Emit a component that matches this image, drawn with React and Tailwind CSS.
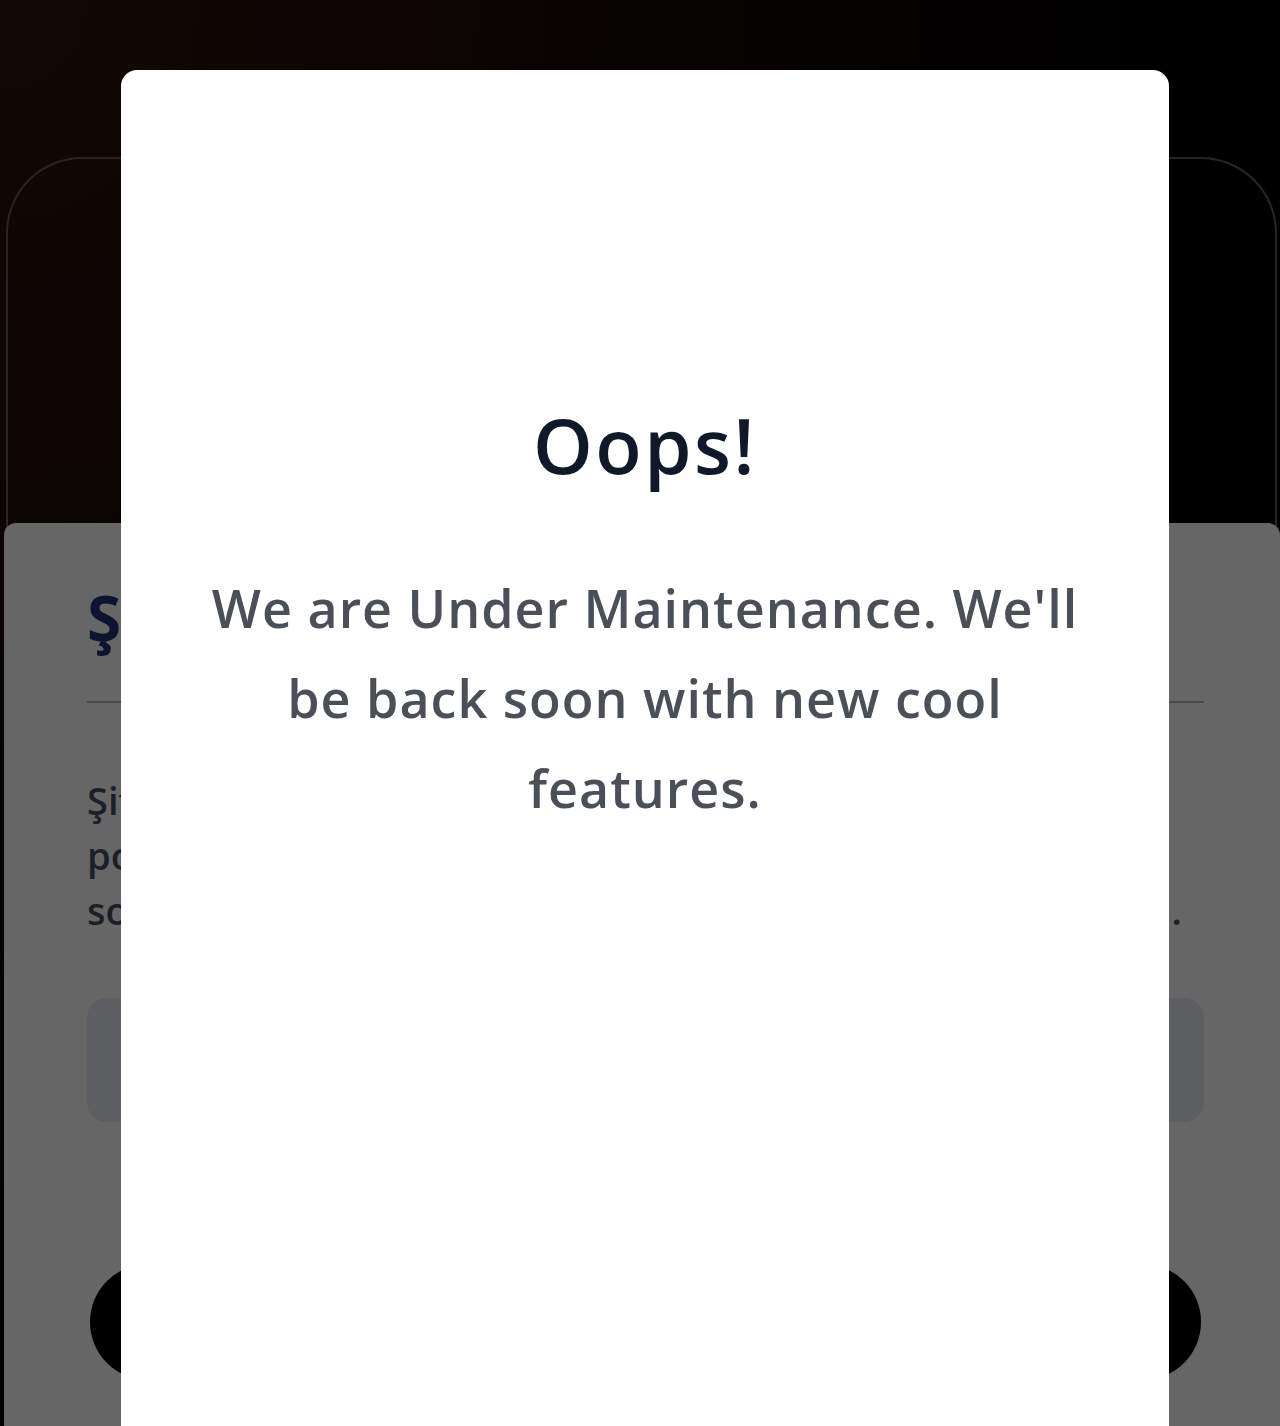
export default function App() {
  return (
    <div
      className="relative w-full h-[1426px] overflow-hidden bg-[radial-gradient(ellipse_at_top_left,#140806_0%,#070302_35%,#000000_70%)]"
      style={{ fontFamily: '"Open Sans", Lato, sans-serif' }}
    >
      {/* phone frame outline */}
      <div className="mt-[157px] ml-[6px] mr-[3px] h-[1400px] rounded-t-[76px] border-2 border-[#262626] border-b-0" />

      {/* bottom sheet (dimmed) */}
      <div className="absolute left-[4px] right-0 top-[523px] bottom-0 rounded-t-[12px] bg-[#666666] pl-[83px] pr-[76px] pt-[63px]">
        <div className="text-[62px] leading-none font-bold text-[#0e1430]">Şifremi unuttum</div>
        <div className="mt-[53px] h-[2px] bg-[#4a4a4a]" />
        <div className="mt-[70px] text-[38px] leading-[55px] font-semibold text-[#1c1f27] pr-[22px]">
          <div>Şifreni sıfırlamak için kayıtlı e-posta</div>
          <div>posta adresini gir, sana bir bağlantı</div>
          <div className="flex justify-between">
            <span>sonra yeni şifreni belirle</span>
            <span>.</span>
          </div>
        </div>
        <div className="mt-[60px] h-[124px] rounded-[20px] bg-[#5c5e61]" />
        <div className="mt-[142px] mx-[3px] h-[116px] rounded-full bg-black" />
      </div>

      {/* modal */}
      <div className="absolute left-[121px] top-[70px] w-[1048px] h-[1400px] rounded-[16px] bg-white pt-[337px] text-center">
        <h1 className="text-[76px] leading-none font-semibold text-[#111827] tracking-[2.5px]">Oops!</h1>
        <p className="mt-[80px] text-[52px] leading-[90px] text-[#4b5058] font-semibold tracking-[1px]">
          We are Under Maintenance. We'll
          <br />
          be back soon with new cool
          <br />
          features.
        </p>
      </div>
    </div>
  );
}
